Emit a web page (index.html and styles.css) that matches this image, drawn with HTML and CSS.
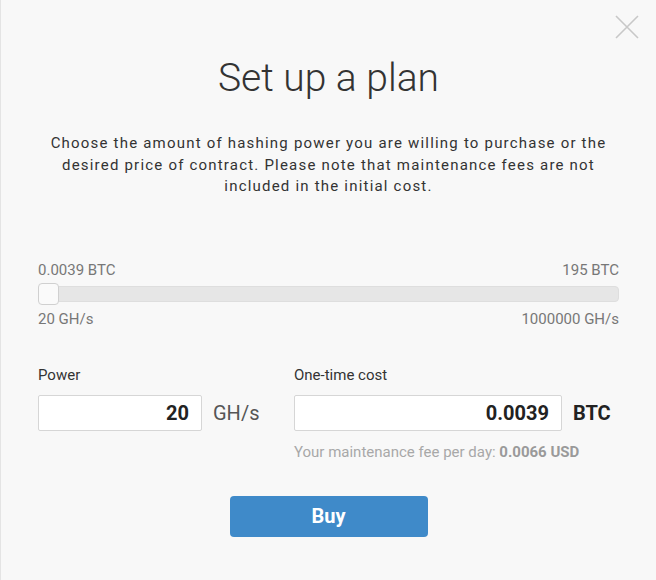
FILE: index.html
```html
<!DOCTYPE html>
<html>
<head>
<meta charset="utf-8">
<link rel="stylesheet" href="styles.css">
</head>
<body>
<div class="modal">
  <button class="close" aria-label="Close">
    <svg width="24" height="24" viewBox="0 0 24 24"><path d="M1 1L23 23M23 1L1 23" stroke="#c8c8c8" stroke-width="1.6" fill="none"/></svg>
  </button>
  <h1 class="title">Set up a plan</h1>
  <p class="intro">Choose the amount of hashing power you are willing to purchase or the desired price of contract. Please note that maintenance fees are not included in the initial cost.</p>

  <div class="slider">
    <div class="slider-labels"><span>0.0039 BTC</span><span>195 BTC</span></div>
    <div class="track"><div class="handle"></div></div>
    <div class="slider-labels"><span>20 GH/s</span><span>1000000 GH/s</span></div>
  </div>

  <div class="fields">
    <div class="field power">
      <label class="field-label">Power</label>
      <div class="input-row">
        <div class="input">20</div>
        <span class="unit">GH/s</span>
      </div>
    </div>
    <div class="field cost">
      <label class="field-label">One-time cost</label>
      <div class="input-row">
        <div class="input">0.0039</div>
        <span class="unit bold">BTC</span>
      </div>
      <div class="note">Your maintenance fee per day: <b>0.0066 USD</b></div>
    </div>
  </div>

  <div class="actions"><button class="buy">Buy</button></div>
</div>
</body>
</html>
```

FILE: styles.css
```css
* { box-sizing: border-box; }
html, body { margin: 0; padding: 0; height: 100%; }
body {
  background: #f8f8f8;
  font-family: Roboto, "Noto Sans", sans-serif;
  color: #333;
}
.modal {
  position: relative;
  min-height: 580px;
  border-left: 1px solid #e4e4e4;
  padding: 52px 37px 0 37px;
}
.close {
  position: absolute;
  top: 15px;
  right: 17px;
  background: none;
  border: 0;
  padding: 0;
  width: 24px;
  height: 24px;
}
.close svg { display: block; }
.title {
  margin: 0;
  text-align: center;
  font-weight: 300;
  font-size: 39px;
  line-height: 52px;
  color: #333;
}
.intro {
  margin: 29px auto 0;
  width: 570px;
  text-align: center;
  font-size: 15px;
  line-height: 21.5px;
  letter-spacing: 1.2px;
  color: #333;
}
.slider { margin-top: 64px; }
.slider-labels {
  display: flex;
  justify-content: space-between;
  font-size: 15px;
  line-height: 16px;
  color: #777;
}
.track {
  position: relative;
  margin: 8px 0 9px;
  height: 16px;
  background: #e6e6e6;
  border: 1px solid #dedede;
  border-radius: 4px;
}
.handle {
  position: absolute;
  left: -1px;
  top: -4px;
  width: 21px;
  height: 22px;
  background: #fafafa;
  border: 1px solid #d0d0d0;
  border-radius: 4px;
}
.fields {
  display: grid;
  grid-template-columns: 256px 1fr;
  margin-top: 40px;
}
.field-label {
  display: block;
  font-size: 15px;
  line-height: 16px;
  color: #333;
}
.input-row {
  display: flex;
  align-items: center;
  margin-top: 12px;
}
.input {
  height: 36px;
  background: #fff;
  border: 1px solid #d6d6d6;
  border-radius: 2px;
  text-align: right;
  padding: 0 12px;
  font-size: 20px;
  font-weight: 700;
  line-height: 34px;
  color: #222;
}
.power .input { width: 164px; }
.cost .input { width: 268px; }
.unit {
  margin-left: 11px;
  font-size: 20px;
  color: #555;
}
.unit.bold { font-weight: 700; color: #222; }
.note {
  margin-top: 12px;
  font-size: 15px;
  color: #a8a8a8;
}
.note b { color: #9a9a9a; }
.actions {
  display: flex;
  justify-content: center;
  margin-top: 35px;
}
.buy {
  width: 198px;
  height: 41px;
  background: #3f8ac9;
  border: 0;
  border-radius: 4px;
  color: #fff;
  font-family: Roboto, sans-serif;
  font-size: 20px;
  font-weight: 700;
}
```
